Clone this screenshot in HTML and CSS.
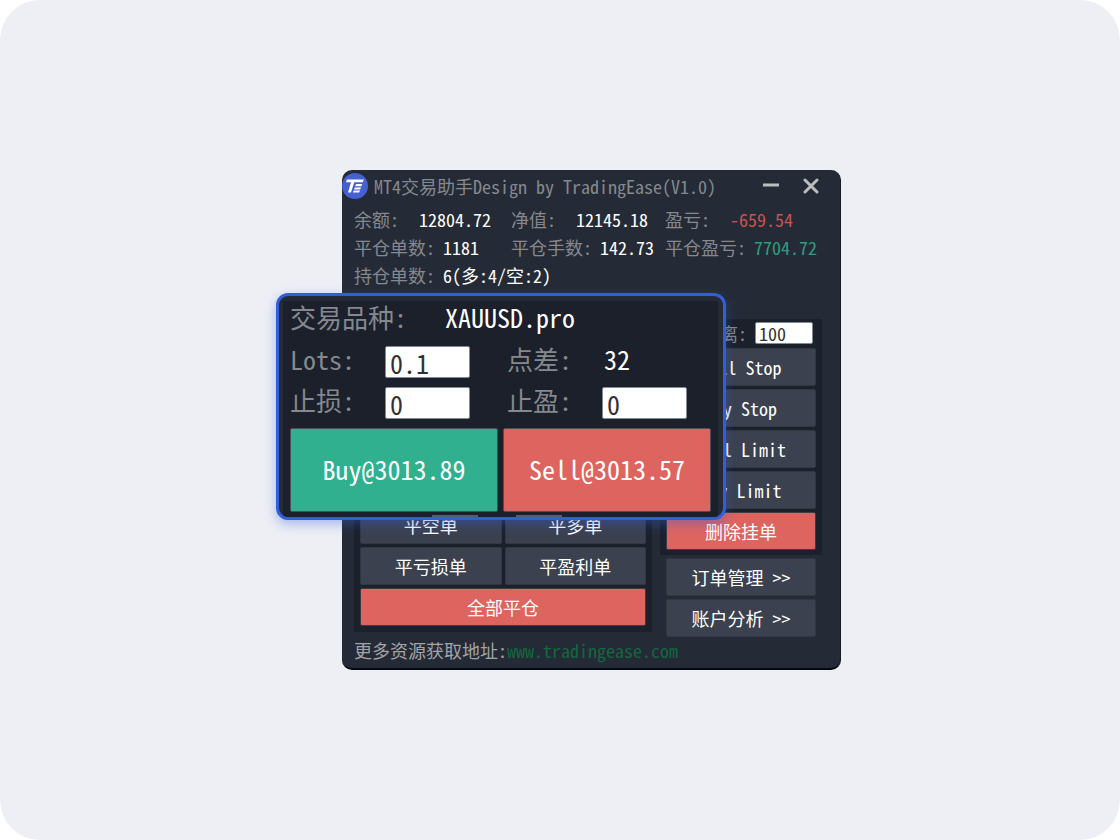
FILE: index.html
```html
<!DOCTYPE html>
<html lang="zh-CN">
<head>
<meta charset="utf-8">
<title>MT4交易助手</title>
<link rel="stylesheet" href="styles.css">
</head>
<body>
<main class="stage">
  <div class="scene">
    <section class="window">
      <header class="titlebar">
        <svg class="logo" viewBox="0 0 26 26" aria-hidden="true">
          <circle cx="13" cy="13" r="13" fill="#4560cf"/>
          <path d="M5 6.6H21.8L20.8 9.2H12.2L9 19.6H6L9 9.2H4Z" fill="#fff"/>
          <path d="M14 11H20.2L19.4 13.2H13.2ZM12.8 14.4H19L18.2 16.4H12.1ZM11.8 17.4H18L17.2 19.6H11Z" fill="#fff"/>
        </svg>
        <h1 class="title">MT4交易助手Design by TradingEase(V1.0)</h1>
        <button class="winbtn" type="button" aria-label="最小化"><svg viewBox="0 0 16 16"><path d="M0 7H16" stroke-width="3"/></svg></button>
        <button class="winbtn" type="button" aria-label="关闭"><svg viewBox="0 0 16 16"><path d="M2 2L14 14M14 2L2 14" stroke-width="3" stroke-linecap="round"/></svg></button>
      </header>
      <dl class="stats">
        <div class="stat"><dt class="short">余额:</dt><dd>12804.72</dd></div>
        <div class="stat"><dt class="short">净值:</dt><dd>12145.18</dd></div>
        <div class="stat"><dt class="short">盈亏:</dt><dd class="loss">-659.54</dd></div>
        <div class="stat"><dt>平仓单数:</dt><dd>1181</dd></div>
        <div class="stat"><dt>平仓手数:</dt><dd>142.73</dd></div>
        <div class="stat"><dt>平仓盈亏:</dt><dd class="gain">7704.72</dd></div>
        <div class="stat wide"><dt>持仓单数:</dt><dd>6(多:4/空:2)</dd></div>
      </dl>
      <div class="columns">
        <div class="panel close-panel">
          <button class="btn" type="button">平空单</button>
          <button class="btn" type="button">平多单</button>
          <button class="btn" type="button">平亏损单</button>
          <button class="btn" type="button">平盈利单</button>
          <button class="btn danger full" type="button">全部平仓</button>
        </div>
        <div class="side">
          <div class="panel pending-panel">
            <div class="distance">
              <label for="distance">挂单距离:</label>
              <input id="distance" class="field" type="text" value="100">
            </div>
            <button class="btn" type="button">Sell Stop</button>
            <button class="btn" type="button">Buy Stop</button>
            <button class="btn" type="button">Sell Limit</button>
            <button class="btn" type="button">Buy Limit</button>
            <button class="btn danger" type="button">删除挂单</button>
          </div>
          <div class="more">
            <button class="btn" type="button">订单管理 &gt;&gt;</button>
            <button class="btn" type="button">账户分析 &gt;&gt;</button>
          </div>
        </div>
      </div>
      <footer class="footer">更多资源获取地址:<a href="#">www.tradingease.com</a></footer>
    </section>

    <section class="ticket">
      <div class="ticket-body">
        <div class="symbol"><span class="name">交易品种:</span><span class="value">XAUUSD.pro</span></div>
        <div class="params">
          <label for="lots">Lots:</label>
          <input id="lots" class="field" type="text" value="0.1">
          <span class="name">点差:</span>
          <span class="value spread">32</span>
          <label for="sl">止损:</label>
          <input id="sl" class="field" type="text" value="0">
          <label for="tp">止盈:</label>
          <input id="tp" class="field" type="text" value="0">
        </div>
        <div class="orders">
          <button class="order buy" type="button">Buy@3013.89</button>
          <button class="order sell" type="button">Sell@3013.57</button>
        </div>
        <div class="tabs"><i></i><i></i></div>
      </div>
    </section>
  </div>
</main>
</body>
</html>
```
FILE: styles.css
```css
* { box-sizing: border-box; }

body {
  margin: 0;
  background: #fff;
  font-family: "Noto Sans Mono CJK SC", "Liberation Mono", "Noto Sans CJK SC", monospace;
  font-size: 18px;
  line-height: 28px;
  color: #fff;
}

button, input { font: inherit; color: inherit; margin: 0; }

.stage {
  min-height: 100vh;
  display: flex;
  align-items: center;
  justify-content: center;
  padding-right: 3px;
  border-radius: 40px;
  background: #eeeff5;
}

.scene {
  position: relative;
  width: 565px;
  max-width: 100%;
  padding-left: 66px;
}

.window {
  overflow: hidden;
  border-radius: 10px;
  border-right: 1px solid #151921;
  border-bottom: 2px solid #05070a;
  background: #252b36;
}

.titlebar {
  display: flex;
  align-items: center;
  height: 31px;
  padding-right: 21px;
}

.logo { width: 26px; height: 26px; margin-right: 6px; }

.title {
  flex: 1;
  margin: 0;
  font-size: 18px;
  font-weight: 400;
  color: #85888e;
  white-space: nowrap;
}

.winbtn {
  width: 16px;
  height: 16px;
  margin-left: 24px;
  padding: 0;
  border: 0;
  background: none;
}

.winbtn svg { display: block; fill: none; stroke: #bdbdbd; }

.stats {
  display: grid;
  grid-template-columns: 157px 154px 1fr;
  margin: 4px 12px 0;
}

.stat { display: flex; white-space: nowrap; }
.stat.wide { grid-column: 1 / -1; }
.stat dt { width: 89px; color: #85888e; }
.stat dt.short { width: 65px; }
.stat dd { margin: 0; }
.stat .loss { color: #c95351; }
.stat .gain { color: #2b9f7f; }

.columns {
  display: flex;
  gap: 8px;
  margin: 30px 18px 0 12px;
}

.panel { padding: 6px; background: #1b202b; }

.close-panel {
  flex: 1;
  display: grid;
  grid-template-columns: 1fr 1fr;
  align-content: end;
  gap: 3px;
  margin-bottom: 5px;
}

.close-panel .full { grid-column: 1 / -1; }

.side { width: 162px; }

.pending-panel {
  display: flex;
  flex-direction: column;
  gap: 3px;
  padding-top: 3px;
  padding-bottom: 5px;
}

.distance {
  display: flex;
  align-items: center;
  justify-content: space-between;
  height: 22px;
  margin: 0 3px 1px 0;
  color: #85888e;
  line-height: 22px;
  white-space: nowrap;
}

.field {
  padding: 0 4px;
  border: 1px solid #818b97;
  border-radius: 2px;
  background: #fff;
  color: #35302f;
}

.distance .field { width: 58px; height: 22px; padding: 0 3px; line-height: 20px; }

.more {
  display: grid;
  gap: 3px;
  padding: 3px 6px 0;
}

.btn {
  height: 38px;
  padding: 0 0 1px;
  border: 1px solid #303844;
  border-radius: 2px;
  background: #3b414f;
  white-space: nowrap;
}

.btn.danger { background: #de6460; border-color: #3f3a45; }

.footer {
  padding: 0 12px 5px;
  color: #a1a3a7;
  line-height: 26px;
  white-space: nowrap;
}

.footer a { color: #12683f; text-decoration: none; }

.ticket {
  position: absolute;
  left: 0;
  top: 123px;
  width: 450px;
  overflow: hidden;
  border: 3px solid #335edb;
  border-radius: 12px;
  background: #252b36;
  box-shadow: 0 4px 12px rgba(51, 94, 219, 0.4);
  font-size: 26px;
}

.ticket-body {
  margin: 5px 5px 0 4px;
  padding: 0 7px;
  background: #1b202b;
}

.symbol { display: flex; line-height: 32px; }
.symbol .name { width: 155px; }

.name, .params label { color: #85888e; white-space: nowrap; }

.params {
  display: grid;
  grid-template-columns: 95px 85px 132px 85px;
  grid-auto-rows: 32px;
  row-gap: 9px;
  margin-top: 13px;
  line-height: 26px;
}

.params > :nth-child(4n + 3) { padding-left: 37px; }
.params .field { width: 85px; height: 32px; line-height: 30px; }
.params .spread { padding-left: 2px; }

.orders {
  display: grid;
  grid-template-columns: 1fr 1fr;
  gap: 5px;
  margin-top: 9px;
}

.order {
  height: 84px;
  padding: 0 0 2px;
  border: 1px solid #47505d;
  border-radius: 2px;
}

.buy { background: #30b08f; }
.sell { background: #de6460; }

.tabs {
  display: flex;
  justify-content: center;
  gap: 38px;
  margin-top: 3px;
  padding-right: 8px;
}

.tabs i { width: 46px; height: 2px; background: #555f6b; }
```
